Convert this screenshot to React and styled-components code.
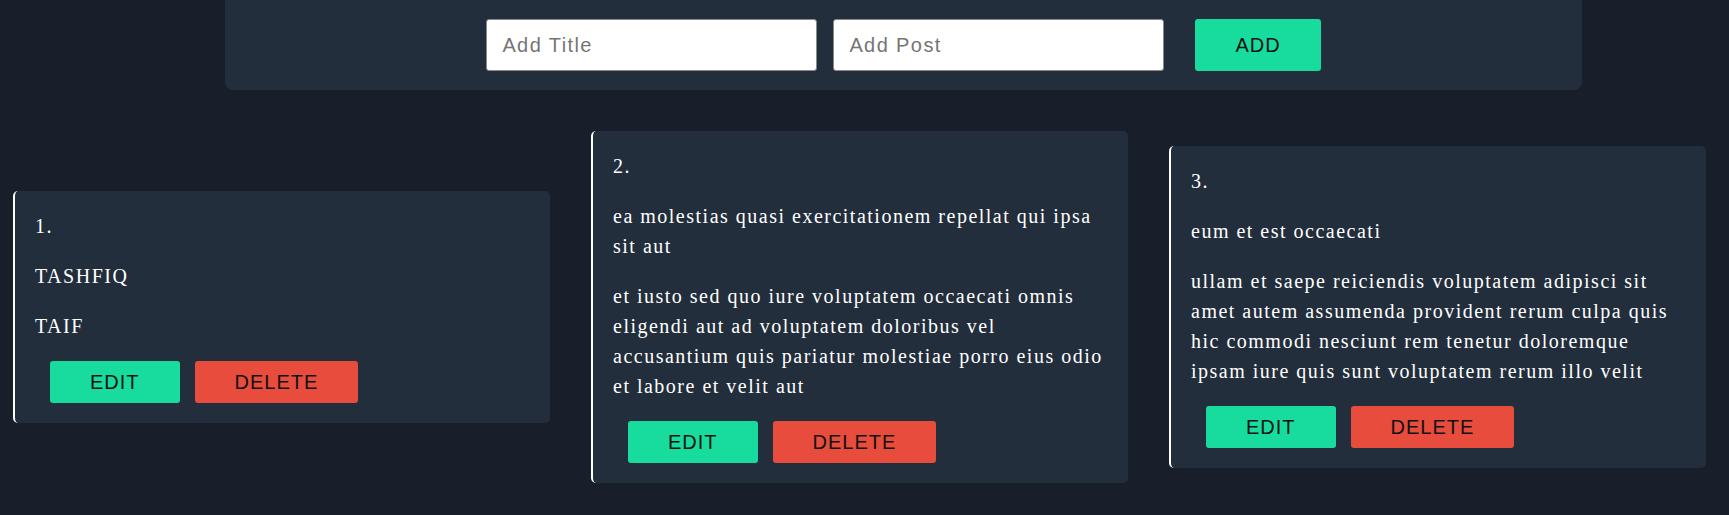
import React from "react";
import styled, { createGlobalStyle } from "styled-components";

const GlobalStyle = createGlobalStyle`
  html, body {
    margin: 0;
    padding: 0;
    background: #181f2b;
    overflow: hidden;
  }
  body {
    font-family: "Liberation Serif", "Times New Roman", serif;
  }
  * { box-sizing: border-box; }
`;

const Page = styled.div`
  min-height: 515px;
  background: #181f2b;
`;

const Header = styled.form`
  margin-left: 225px;
  width: 1357px;
  background: #222e3c;
  border-radius: 0 0 8px 8px;
  padding: 19px 0;
  display: flex;
  justify-content: center;
  align-items: stretch;
  gap: 16px;
`;

const Input = styled.input`
  width: 331px;
  height: 52px;
  padding: 0 15px;
  border: 1px solid #8a8a8a;
  border-radius: 3px;
  background: #fff;
  font-family: "Liberation Sans", Arial, sans-serif;
  font-size: 20px;
  letter-spacing: 1.4px;
  color: #222;
  outline: none;
  &::placeholder {
    color: #757575;
  }
`;

const Button = styled.button`
  font-family: "Liberation Sans", Arial, sans-serif;
  font-size: 20px;
  line-height: 22px;
  letter-spacing: 1px;
  color: #111;
  background: ${(p) => (p.$variant === "danger" ? "#e74c3c" : "#17dc9e")};
  border: none;
  border-radius: 3px;
  padding: ${(p) => (p.$big ? "15px 40px" : "10px 40px")};
  margin-left: ${(p) => p.$offset || 0}px;
  cursor: pointer;
`;

const Cards = styled.div`
  margin-top: 41px;
  padding-left: 13px;
  display: flex;
  align-items: center;
  gap: 41px;
`;

const Card = styled.div`
  width: 537px;
  flex: none;
  background: #222e3c;
  border-left: 2px solid #ffffff;
  border-radius: 5px;
  padding: 0 20px 20px 20px;
  color: #ffffff;
`;

const Text = styled.p`
  margin: 20px 0;
  font-family: "Liberation Serif", "Times New Roman", serif;
  font-size: 20px;
  line-height: 30px;
  letter-spacing: 1.5px;
`;

const Actions = styled.div`
  display: flex;
`;

const posts = [
  { id: 1, title: "TASHFIQ", body: "TAIF" },
  {
    id: 2,
    title: "ea molestias quasi exercitationem repellat qui ipsa sit aut",
    body: "et iusto sed quo iure voluptatem occaecati omnis eligendi aut ad voluptatem doloribus vel accusantium quis pariatur molestiae porro eius odio et labore et velit aut",
  },
  {
    id: 3,
    title: "eum et est occaecati",
    body: "ullam et saepe reiciendis voluptatem adipisci sit amet autem assumenda provident rerum culpa quis hic commodi nesciunt rem tenetur doloremque ipsam iure quis sunt voluptatem rerum illo velit",
  },
];

export default function App() {
  return (
    <Page>
      <GlobalStyle />
      <Header onSubmit={(e) => e.preventDefault()}>
        <Input placeholder="Add Title" />
        <Input placeholder="Add Post" />
        <Button type="submit" $big $offset={15}>ADD</Button>
      </Header>
      <Cards>
        {posts.map((p) => (
          <Card key={p.id}>
            <Text>{p.id}.</Text>
            <Text>{p.title}</Text>
            <Text>{p.body}</Text>
            <Actions>
              <Button $offset={15}>EDIT</Button>
              <Button $variant="danger" $offset={15}>DELETE</Button>
            </Actions>
          </Card>
        ))}
      </Cards>
    </Page>
  );
}
